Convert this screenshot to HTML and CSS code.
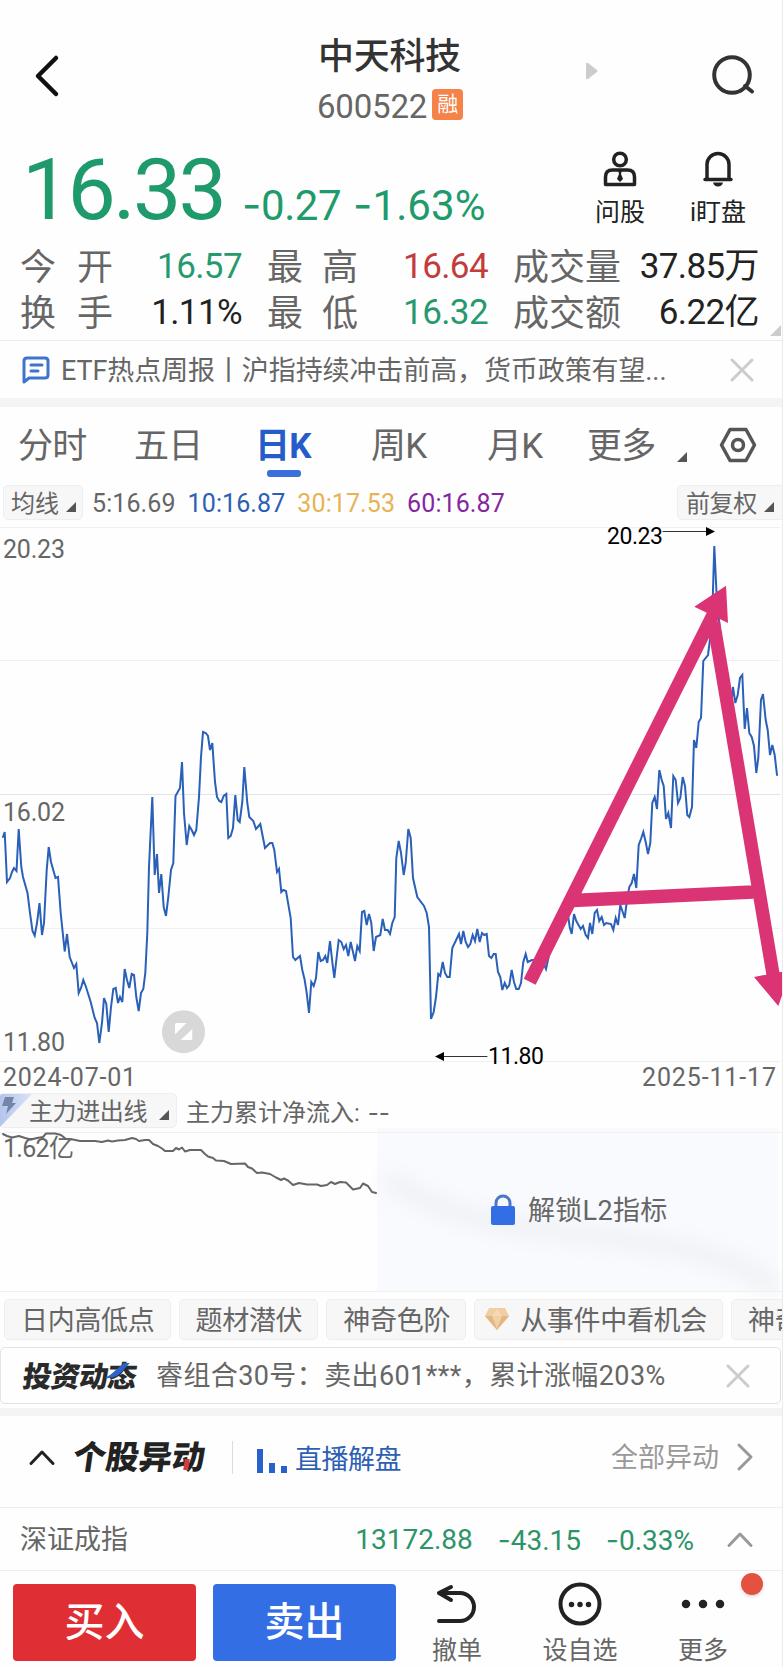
FILE: index.html
```html
<!DOCTYPE html>
<html lang="zh-CN">
<head>
  <meta charset="UTF-8" />
  <meta name="viewport" content="width=device-width, initial-scale=1.0" />
  <title>中天科技 600522</title>
  <link rel="stylesheet" href="styles.css">
</head>
<body>
  <header class="header">
    <svg class="back" width="26" height="44" viewBox="0 0 26 44"><path d="M22 4 4 22 22 40" /></svg>
    <div class="stock">
      <h1>中天科技</h1>
      <div class="code"><span>600522</span><span class="badge">融</span></div>
    </div>
    <svg class="next" width="12" height="18" viewBox="0 0 12 18"><path d="M0 2Q0 0 2 1L11 8Q12 9 11 10L2 17Q0 18 0 16Z" /></svg>
    <svg class="search" width="44" height="44" viewBox="0 0 44 44"><circle cx="21" cy="22" r="17.8" /><path d="m34 33 7 5.500" /></svg>
  </header>

  <section class="quote">
    <div class="price">16.33</div>
    <div class="change"><i>-</i>0.27</div>
    <div class="change percent"><i>-</i>1.63%</div>
    <div class="action ask">
      <svg width="36" height="36" viewBox="0 0 36 36">
        <circle cx="18" cy="8.500" r="6.300" />
        <path d="M3.500 33.500V26q0-7 7-7h15q7 0 7 7v7.500Z" />
        <path class="fill" d="M16 19h4l-1 4 2 5-3 3-3-3 2-5Z" />
      </svg>
      <span>问股</span>
    </div>
    <div class="action watch">
      <svg width="36" height="36" viewBox="0 0 36 36">
        <path d="M7 28V13.500a11 11 0 0 1 22 0V28M5 28.500h26" />
        <path class="fill" d="M13 31.500h10q-1 4-5 4t-5-4Z" />
      </svg>
      <span>i盯盘</span>
    </div>
  </section>

  <section class="stats">
    <div class="label"><span>今</span><span>开</span></div><div class="value down">16.57</div>
    <div class="label"><span>最</span><span>高</span></div><div class="value up">16.64</div>
    <div class="label"><span>成</span><span>交</span><span>量</span></div><div class="value">37.85万</div>
    <div class="label"><span>换</span><span>手</span></div><div class="value">1.11%</div>
    <div class="label"><span>最</span><span>低</span></div><div class="value down">16.32</div>
    <div class="label"><span>成</span><span>交</span><span>额</span></div><div class="value">6.22亿</div>
    <b class="corner"></b>
  </section>

  <section class="news">
    <svg width="28" height="28" viewBox="0 0 28 28"><path d="M2 26V5q0-3 3-3h18q3 0 3 3v14q0 3-3 3H7ZM9 9h11M9 15h7" /></svg>
    <p>ETF热点周报丨沪指持续冲击前高，货币政策有望...</p>
    <svg class="close" width="24" height="24" viewBox="0 0 24 24"><path d="m2 2 20 20M22 2 2 22" /></svg>
  </section>

  <nav class="tabs">
    <span>分时</span>
    <span>五日</span>
    <span class="active">日K</span>
    <span>周K</span>
    <span>月K</span>
    <span class="more">更多</span>
    <b class="tri"></b>
    <svg width="38" height="38" viewBox="0 0 38 38"><path d="M11 3.500h16l8.500 15.500-8.500 15.500H11L2.500 19Z" /><circle cx="19" cy="19" r="5.500" /></svg>
  </nav>

  <section class="averages">
    <div class="picker">均线<b class="tri"></b></div>
    <span class="ma5">5:16.69</span>
    <span class="ma10">10:16.87</span>
    <span class="ma30">30:17.53</span>
    <span class="ma60">60:16.87</span>
    <div class="picker right">前复权<b class="tri"></b></div>
  </section>

  <svg class="chart" width="783" height="566" viewBox="0 527 783 566">
    <path class="grid" d="M0 527.500H780M0 660.500H780M0 928.500H780M0 1061.500H780" />
    <path class="grid mid" d="M0 794.500H780" />
    <polyline class="line" points="3,837 4.7,832 7,882 10,878 12,872 14,868 16.5,871 18.7,829 21.3,867 23,877 27.500,893 30,913 32.500,931 34.700,935.500 37,923 39.500,903 42,935 44,923 46.700,870 48.700,847 51,862 55.500,878 58,877 60.700,913 64.700,951.500 67,934 69.700,957 74,968 76.300,964 78.700,993 81,988 83.300,980 86,987 90.700,1002 94.700,1018 97,1023 99.300,1043 102,1023 104,998 106.300,1004 108.700,1032 111,1007 113.300,989 115.700,988 118,1003 120,997 122.300,1002 124.700,969 127,980 129.300,988 131.700,974 134,975 136.300,997 138.700,1011 141,993 143.300,989 145.300,973 147.300,933 149,867 152.300,797 154.700,875 157,854 159,893 161.300,874 163.700,907 166,916 168.300,897 171,870 173.300,863 174.700,820 175.500,796 180,788 182,762 184,813 186.700,845 189.300,826 191.700,830 194,835 196.300,830 199,797 201,757 203,732 205.700,733 208,736 210,750 212.300,743 215,782 217,797 219.300,801 221.300,802 223.700,796 226.300,794 228.300,838 230.700,836 233,828 235.300,795 237.700,820 239.700,822 242.300,802 244.300,767 247.300,803 249.300,817 253.300,821 256,829 260.300,824 265,848 270,843 272.300,843 274.300,850 277,872 279,869 281.300,892 283.300,890 286,891 290.700,918 293,957 295.300,960 300,956 302.300,970 304.700,980 306.700,993 309,1013 311.300,982 313.700,986 316,978 318.300,952 320.700,961 323,960 325.300,956 327.300,963 330,941 332.300,962 334.300,978 336.700,957 338.700,940 341.300,942 343.700,949 346,945 348.300,956 350.700,942 353,952 355,961 357.300,946 359.700,951 362,912 364.300,911 366.700,925 369,914 371.300,923 373.700,951 376,937 380.300,935 382.700,919 385,930 387.700,930 390,934 392.300,923 394.700,917 396.300,858 398.700,841 401,853 403.700,875 405.700,863 408.300,829 410.700,838 413,878 417.300,897 424,906 426.700,913 429,927 431,1019 433.700,1012 436,997 438.300,974 440.300,976 442.700,962 445,973 447.300,977 449.700,977 452.300,948 459,934 461,944 463.300,931 465.700,942 468,947 470.300,944 472.700,935 475,941 477.300,929 479.700,942 482,933 484.300,935 486.700,934 489,956 491.300,958 493.700,954 495.700,954 498,972 500.300,977 502.300,990 504.700,983 507,988 509.300,985 511.700,970 514,982 516.300,989 518.700,989 521,983 523.300,962 525.700,954 527.700,962 532,960 542,960 546,969 549.700,952 568,915 569.700,927 571.700,934 574,914 576.300,921 580.700,929 583,926 585.700,935 588,938 590,923 592.300,934 594.700,913 597,910 599.300,921 601.700,917 604,925 606.300,923 611,924 613.300,930 615.700,918 618,925 620.300,905 622.700,912 624.700,918 627,900 629.300,887 631.700,883 634,874 636.300,888 638.700,845 641,839 643.300,832 645.700,842 648,854 650.300,843 652.300,803 654.700,797 657,809 659.300,770 661.700,780 663.700,786 666,819 668.300,813 671,828 673.300,776 675.700,780 678,803 680.300,798 682.700,777 685,786 687.300,815 689.300,817 692,807 694,740 696.300,748 698.700,722 701,718 703.300,661 708,655 710.300,637 712.300,613 714.300,546 717,603 719.700,627 723,660 729,690 732,697 733,687 735.300,703 737.700,695 740,678 742.300,675 744.700,729 747,708 749.300,733 751.700,737 754,746 756.300,773 758.300,758 761,700 763,694 765.700,720 767.700,730 770,755 772.300,745 774.700,755 777,775" />
    <g class="axis">
      <text x="3" y="558" textLength="62">20.23</text>
      <text x="3" y="820.500" textLength="62">16.02</text>
      <text x="3" y="1051" textLength="62">11.80</text>
      <text x="3" y="1086" textLength="133">2024-07-01</text>
      <text x="642" y="1086" textLength="134">2025-11-17</text>
    </g>
    <g class="mark">
      <text x="607" y="543.500" textLength="56">20.23</text>
      <path d="M663 531.500h44" /><path d="M706 527v9l9-4.500Z" />
      <text x="488" y="1063.500" textLength="56">11.80</text>
      <path d="M487 1056.500h-44" /><path d="M444 1052v9l-9-4.500Z" />
    </g>
    <g class="expand">
      <circle cx="183.500" cy="1031.700" r="21.500" />
      <path d="M175 1024.500q0-1.500 1.500-1.500h10L175 1034.500ZM192.300 1029v9.500q0 1.500-1.500 1.500h-10Z" />
    </g>
    <g class="trend">
      <path d="M529.700 981.700 714 613M713.500 622 774 980M573 900.500l180-8.500" />
      <path class="head" d="M726 585.700 694.300 606.700 728 623ZM754 977 791 970 778.300 1006Z" />
    </g>
  </svg>

  <section class="flow-head">
    <div class="picker flow-picker">
      <svg width="34" height="34" viewBox="0 0 34 34">
        <defs><linearGradient id="fold" x1="0" y1="0" x2="1" y2="0"><stop offset="0" stop-color="#b3c5ee" /><stop offset="1" stop-color="#d9e3f8" /></linearGradient></defs>
        <path fill="url(#fold)" d="M0 2Q0 0 2 0H32L0 33Z" />
        <path fill="#7486a8" d="M5 3h9l-2 6h4L6 20l2-8H2Z" />
      </svg>
      主力进出线<b class="tri"></b>
    </div>
    <span>主力累计净流入: <i>--</i></span>
  </section>

  <section class="flow">
    <svg class="flow-chart" width="783" height="164" viewBox="0 1128 783 164">
      <defs><filter id="soft" x="-20%" y="-50%" width="140%" height="200%"><feGaussianBlur stdDeviation="9" /></filter></defs>
      <rect class="locked" x="377" y="1128" width="401" height="163" />
      <path class="ghost" filter="url(#soft)" d="M392 1182 410 1192 450 1211 510 1226 610 1238 690 1250 740 1266 770 1284" />
      <path class="grid" d="M0 1132.500H783M0 1291.500H783" />
      <polyline points="3,1134 7,1136 12,1137.500 19,1136 25,1138 31,1139.500 37,1138 43,1137 46,1133.500 55,1133.500 61,1135 66,1139 73,1139.500 80,1141 95,1141 102,1142 108,1140.500 112,1141.500 118,1140.500 125,1140 132,1138 136,1139 139,1141 145,1140 149,1140 153,1144 158,1146 162,1148.500 165,1151 173,1151 176,1148 179,1149.500 182,1147.500 185,1151.500 190,1150 201,1150 205,1154 208,1156.500 213,1158 216,1160.500 224,1161 231,1164 245,1163.500 248,1167 252,1168.500 257,1173 262,1172.500 270,1174 276,1177.500 281,1180 284,1178.500 288,1180.500 293,1185 299,1183 307,1184.500 317,1184.500 321,1186 327,1185 331,1182 335,1184 340,1182 346,1182.500 353,1189.500 360,1188 363,1183.500 368,1186 372,1192 376,1193" />
      <text x="3" y="1157" textLength="71">1.62亿</text>
    </svg>
    <div class="unlock">
      <svg width="26" height="32" viewBox="0 0 26 32"><path class="shackle" d="M6 13V9a7 7 0 0 1 14 0v4" /><rect x="1" y="12" width="24" height="19" rx="2" /></svg>
      <span>解锁L2指标</span>
    </div>
  </section>

  <section class="chips">
    <span>日内高低点</span>
    <span>题材潜伏</span>
    <span>神奇色阶</span>
    <span class="gem">
      <svg width="26" height="22" viewBox="0 0 26 22"><path fill="#f0cda4" d="M5 0h16l4 8-12 14L1 8Z" /><path fill="#e6b682" d="M1 8h24L13 22Z" /><path fill="#f8dfc0" d="M8 8 13 1l5 7-5 13Z" opacity=".6" /></svg>
      从事件中看机会
    </span>
    <span>神奇</span>
  </section>

  <section class="promo">
    <strong>投资动<em>态<svg width="24" height="17" viewBox="0 0 24 17"><path d="M17 0h6L16 9Q11 16 0 15q6-3 10-8Z" /></svg></em></strong>
    <p>睿组合30号：卖出601***，累计涨幅203%</p>
    <svg class="close" width="24" height="24" viewBox="0 0 24 24"><path d="m2 2 20 20M22 2 2 22" /></svg>
  </section>

  <section class="moves">
    <svg class="fold" width="28" height="18" viewBox="0 0 28 18"><path d="M3 15.500 14 4l11 11.500" /></svg>
    <h2>个股异<em>动</em></h2>
    <div class="live">
      <svg width="30" height="26" viewBox="0 0 30 26"><path d="M0 1h6v24H0ZM12 15h6v10h-6ZM24 18h6v7h-6Z" /></svg>
      直播解盘
    </div>
    <a class="all">全部异动</a>
    <svg class="arrow" width="18" height="30" viewBox="0 0 18 30"><path d="m3 3 12 12L3 27" /></svg>
  </section>

  <section class="index">
    <span class="name">深证成指</span>
    <span>13172.88</span>
    <span><i>-</i>43.15</span>
    <span><i>-</i>0.33%</span>
    <svg class="arrow" width="28" height="18" viewBox="0 0 28 18"><path d="M3 15.500 14 4l11 11.500" /></svg>
  </section>

  <footer class="footer">
    <button class="buy">买入</button>
    <button class="sell">卖出</button>
    <div class="tool cancel">
      <svg width="44" height="44" viewBox="0 0 44 44"><path d="M16 5 4 11l12 7M4 11h21a14 14 0 0 1 0 28H4" /></svg>
      <span>撤单</span>
    </div>
    <div class="tool select">
      <svg width="44" height="44" viewBox="0 0 44 44"><circle cx="22" cy="22" r="19.500" /><path class="dots" d="M13.500 22.500h0M22 22.500h0M30.500 22.500h0" /></svg>
      <span>设自选</span>
    </div>
    <div class="tool others">
      <svg width="44" height="44" viewBox="0 0 44 44"><path class="dots big" d="M5 22h0M22 22h0M39 22h0" /></svg>
      <span>更多</span>
      <b class="dot"></b>
    </div>
  </footer>
</body>
</html>
```

FILE: styles.css
```css
* {
  margin: 0;
  padding: 0;
  box-sizing: border-box;
}

body {
  width: 783px;
  height: 1667px;
  overflow: hidden;
  font-family: Roboto, 'Noto Sans CJK SC', sans-serif;
  font-size: 27px;
  line-height: 1;
  color: #666;
  background: #fefefe;
  border-right: 1px solid #ebebeb;
  white-space: nowrap;
}

svg {
  display: block;
  flex: none;
  overflow: visible;
  fill: none;
  stroke-linecap: round;
  stroke-linejoin: round;
}

i, em {
  font-style: normal;
}

section, nav, header, footer {
  width: 783px;
}

/* header */
.header {
  display: flex;
  height: 141px;
  color: #333;
}

.back {
  margin: 54px 0 0 34px;
  stroke: #111;
  stroke-width: 4.5;
}

.stock {
  width: 202px;
  margin-left: 260px;
  padding-top: 39px;
}

.stock h1 {
  margin-left: -2px;
  font-size: 36px;
  font-weight: 500;
  letter-spacing: -0.3px;
}

.code {
  display: flex;
  margin-top: 14px;
  font-size: 33px;
  line-height: 35px;
  letter-spacing: -0.2px;
  color: #666;
}

.code > span:first-child {
  margin-left: -3px;
}

.badge {
  width: 31px;
  height: 31px;
  margin-left: 5px;
  border-radius: 4px;
  background: #f58248;
  color: #fff;
  font-size: 21px;
  line-height: 31px;
  text-align: center;
}

.next {
  margin: 62px 0 0 64px;
  fill: #ccc;
}

.search {
  margin: 53px 0 0 113px;
  stroke: #333;
  stroke-width: 4;
}

/* price */
.quote {
  display: flex;
  height: 103px;
  color: #1f9b6b;
}

.price {
  width: 220px;
  padding-left: 22px;
  font-size: 86px;
  line-height: 98px;
  letter-spacing: -2.8px;
}

.change {
  width: 111px;
  padding-left: 22px;
  font-size: 42px;
  line-height: 127px;
  letter-spacing: -0.4px;
}

.change i, .index i {
  font-family: Inter, sans-serif;
}

.percent {
  width: 245px;
  letter-spacing: 0.1px;
}

.action {
  display: flex;
  flex-direction: column;
  align-items: center;
  width: 88px;
  padding-top: 10px;
  font-size: 25px;
  color: #222;
}

.action svg {
  margin-bottom: 13px;
  stroke: #222;
  stroke-width: 3.5;
}

.action .fill {
  fill: #222;
  stroke: none;
}

.watch {
  width: 108px;
}

/* figures */
.stats {
  position: relative;
  display: grid;
  grid-template-columns: 93px 154px 91px 155px 108px 138px;
  grid-template-rows: 46px 47px;
  height: 97px;
  padding: 1px 0 0 20px;
  font-size: 36px;
  line-height: 47px;
  border-bottom: 1px solid #ececec;
}

.label {
  display: flex;
  justify-content: space-between;
}

.value {
  padding-right: 25px;
  font-size: 35px;
  line-height: 43px;
  letter-spacing: -0.6px;
  text-align: right;
  color: #222;
}

.value:nth-of-type(6n) {
  padding-right: 0;
}

.down {
  color: #279a6d;
}

.up {
  color: #c23c3c;
}

.corner {
  position: absolute;
  right: 2px;
  bottom: 4px;
  border-left: 11px solid transparent;
  border-bottom: 11px solid #ccc;
}

/* news */
.news {
  display: flex;
  align-items: center;
  height: 66px;
  padding: 0 29px 0 22px;
  border-bottom: 9px solid #f4f4f4;
}

.news svg {
  stroke: #3f74cc;
  stroke-width: 3;
}

.news p {
  width: 660px;
  margin-left: 11px;
  padding-top: 3px;
  letter-spacing: -0.1px;
}

.close {
  margin-left: auto;
}

svg.close {
  stroke: #ccc;
  stroke-width: 3;
}

/* tabs */
.tabs {
  display: flex;
  height: 78px;
  padding-left: 18px;
  font-size: 35px;
  line-height: 79px;
}

.tabs span {
  width: 116px;
  letter-spacing: -0.8px;
}

.tabs .active {
  position: relative;
  margin-left: 5px;
  font-weight: 700;
  color: #255cc9;
}

.active::after {
  content: '';
  position: absolute;
  left: 12px;
  top: 63px;
  width: 34px;
  height: 7px;
  border-radius: 3px;
  background: #3a6fdc;
}

.tabs .more {
  width: 90px;
  margin-left: -16px;
}

.tri {
  flex: none;
  align-self: center;
  border-left: 10px solid transparent;
  border-bottom: 10px solid #555;
}

.tabs .tri {
  margin-top: 22px;
}

.tabs svg {
  margin: 19px 0 0 32px;
  stroke: #555;
  stroke-width: 3.5;
}

/* moving averages */
.averages {
  display: flex;
  align-items: center;
  height: 42px;
  padding-bottom: 7px;
  font-size: 25px;
  line-height: 34px;
}

.averages > span {
  margin-right: 12px;
  padding-top: 3px;
  letter-spacing: 0.1px;
}

.picker {
  display: flex;
  width: 80px;
  height: 35px;
  margin: 0 9px 0 3px;
  padding-left: 7px;
  background: #f7f7f7;
  border: 1px solid #eee;
  border-radius: 5px;
  font-size: 24px;
  line-height: 36px;
}

.picker .tri {
  margin: 9px 0 0 7px;
}

.picker.right {
  width: 110px;
  margin: 0 -4px 0 auto;
  padding-left: 8px;
  letter-spacing: -0.4px;
}

.ma10 {
  color: #2b60b4;
}

.ma30 {
  color: #e6b452;
}

.ma60 {
  color: #85269f;
}

/* price chart */
.grid {
  stroke: #f0f0f0;
}

.mid {
  stroke: #e2e4e6;
}

.line {
  stroke: #2a60b8;
  stroke-width: 2;
  stroke-linejoin: miter;
}

.axis text, .flow-chart text {
  fill: #666;
  font-size: 25px;
}

.mark {
  fill: #000;
  font-size: 23px;
}

.mark path:nth-of-type(odd) {
  stroke: #333;
}

.expand circle {
  fill: #d8d8d8;
}

.expand path {
  fill: #fff;
}

.trend path {
  stroke: #da3474;
  stroke-width: 13.3;
  stroke-linecap: butt;
}

.trend .head {
  fill: #da3474;
  stroke: none;
}

/* money flow */
.flow-head {
  display: flex;
  height: 35px;
  font-size: 24px;
  line-height: 39px;
}

.flow-head i {
  margin-left: 2px;
  font-family: Inter, sans-serif;
}

.flow-picker {
  width: 178px;
  margin: 0 9px 0 -1px;
  padding: 0;
  letter-spacing: -0.4px;
  line-height: 37px;
}

.flow-picker svg {
  margin-right: -5px;
}

.flow-picker .tri {
  margin-left: 12px;
}

.flow {
  display: grid;
  height: 164px;
}

.flow > * {
  grid-area: 1 / 1;
}

.flow-chart polyline {
  stroke: #666;
  stroke-width: 2;
}

.locked {
  fill: #f8fafe;
}

.ghost {
  stroke: #f0f2f6;
  stroke-width: 20;
}

.unlock {
  display: flex;
  align-items: center;
  gap: 12px;
  padding-left: 490px;
}

.unlock span {
  padding-top: 3px;
  letter-spacing: 0.3px;
}

.unlock rect {
  fill: #346ee4;
}

.shackle {
  stroke: #4a78c8;
  stroke-width: 3;
}

/* shortcuts */
.chips {
  display: flex;
  gap: 8px;
  height: 55px;
  padding: 7px 0 0 4px;
  overflow: hidden;
}

.chips span {
  flex: none;
  height: 41px;
  padding: 0 15px 0 16px;
  background: #f7f7f7;
  border: 1px solid #eee;
  border-radius: 5px;
  line-height: 42px;
  letter-spacing: -0.3px;
}

.chips .gem {
  display: flex;
  gap: 10px;
  padding: 0 15px 0 9px;
}

.gem svg {
  margin-top: 8px;
}

/* promo */
.promo {
  display: flex;
  align-items: center;
  width: 781px;
  height: 57px;
  padding: 0 30px 0 22px;
  border: 1px solid #e2e2e2;
  border-radius: 5px;
}

.promo p {
  padding-top: 2px;
  letter-spacing: 0.4px;
}

.promo strong {
  width: 133px;
  padding-top: 3px;
  font-size: 29px;
  font-weight: 900;
  letter-spacing: -0.7px;
  color: #2a2a2a;
  transform: skewX(-8deg);
}

.promo em {
  position: relative;
}

.promo em svg {
  position: absolute;
  left: -3px;
  top: 3px;
  fill: #2d62cc;
}

/* stock moves */
.moves {
  display: flex;
  align-items: center;
  height: 100px;
  margin-top: 4px;
  border-top: 8px solid #f4f4f4;
  border-bottom: 1px solid #eee;
  padding-bottom: 9px;
}

.fold {
  margin-left: 28px;
  stroke: #222;
  stroke-width: 3;
}

.moves h2 {
  width: 134px;
  margin-left: 17px;
  font-size: 33px;
  font-weight: 900;
  color: #222;
  transform: skewX(-8deg);
}

.moves em {
  position: relative;
}

.moves em::after {
  content: '';
  position: absolute;
  left: 13px;
  bottom: 7px;
  width: 5px;
  height: 11px;
  background: #d43840;
}

.live {
  display: flex;
  align-items: center;
  gap: 8px;
  height: 33px;
  margin-left: 25px;
  padding: 7px 0 0 24px;
  border-left: 1px solid #ddd;
  color: #2d5fb4;
  letter-spacing: -0.5px;
}

.live svg {
  fill: #2860ce;
}

.all {
  margin-left: auto;
  padding-top: 2px;
  color: #999;
}

.arrow {
  stroke: #999;
  stroke-width: 3;
}

.moves .arrow {
  margin: 0 29px 0 17px;
}

/* market index */
.index {
  display: flex;
  align-items: center;
  height: 63px;
  padding-left: 20px;
  border-bottom: 1px solid #eee;
  font-size: 28px;
  color: #2d9468;
}

.index span {
  margin-right: 25px;
  padding-top: 2px;
}

.index .name {
  margin-right: auto;
  font-size: 27px;
  color: #666;
}

.index .arrow {
  margin: 0 29px 0 7px;
}

/* bottom bar */
.footer {
  display: flex;
  height: 96px;
  padding: 13px 0 0 13px;
}

button {
  flex: none;
  width: 183px;
  height: 77px;
  margin-right: 17px;
  border: 0;
  border-radius: 4px;
  font: 500 40px/77px Roboto, 'Noto Sans CJK SC', sans-serif;
  color: #fff;
}

.buy {
  background: #df2f35;
}

.sell {
  background: #346ee5;
}

.tool {
  position: relative;
  display: flex;
  flex: none;
  flex-direction: column;
  align-items: center;
  margin-top: -2px;
  font-size: 25px;
}

.tool svg {
  margin-bottom: 12px;
  stroke: #222;
  stroke-width: 4;
}

.cancel {
  width: 90px;
  margin-left: -1px;
}

.select {
  width: 156px;
}

.others {
  width: 90px;
}

.dots {
  stroke-width: 5.5;
}

.tool .big {
  stroke-width: 8.5;
}

.dot {
  position: absolute;
  top: -9px;
  right: -15px;
  width: 22px;
  height: 22px;
  border-radius: 50%;
  background: #e55041;
  box-shadow: 0 2px 3px #ddd;
}
```
